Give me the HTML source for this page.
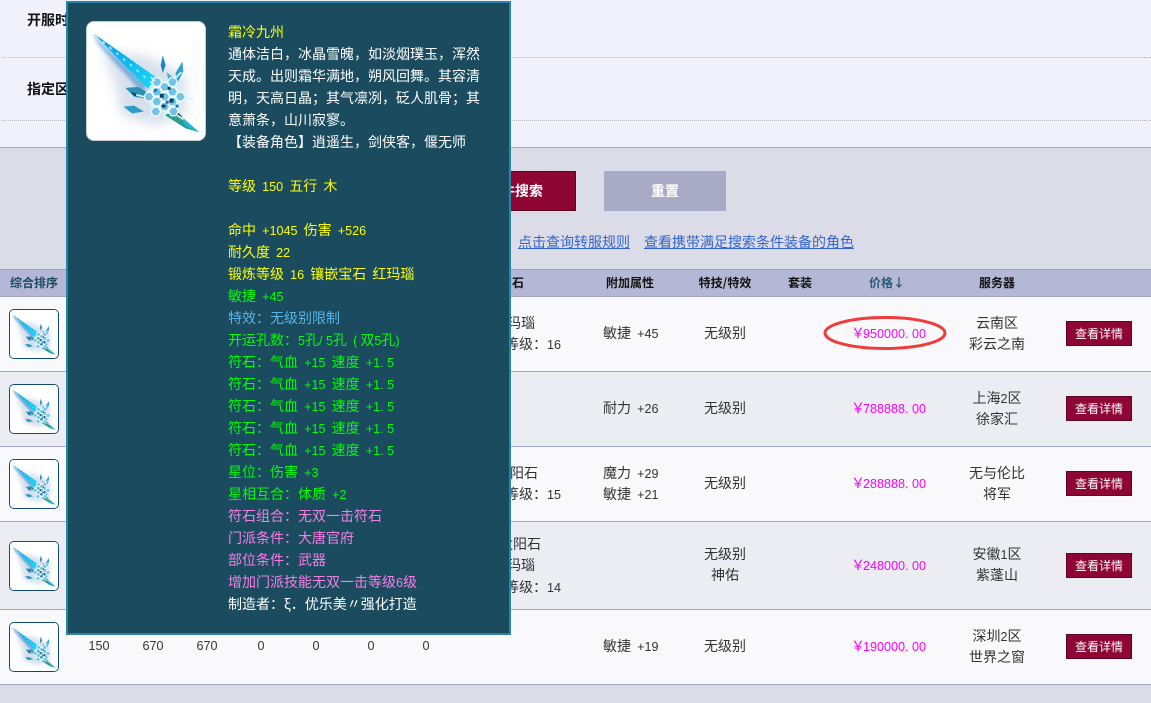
<!DOCTYPE html>
<html><head><meta charset="utf-8">
<style>
html,body{margin:0;padding:0;width:1151px;height:703px;overflow:hidden;background:#dcdce8}
body{position:relative;font:14px/22px "WenQuanYi Zen Hei","Noto Sans CJK SC",sans-serif;color:#333;word-spacing:3px}
b,i{font-style:normal}
.a{position:absolute;white-space:nowrap}
.c{position:absolute;white-space:nowrap;text-align:center;transform:translateX(-50%)}
.lh{line-height:21px}
.m{font-family:"Liberation Sans",sans-serif;font-size:12.6px;line-height:1}
.d{letter-spacing:3.5px}
.w{letter-spacing:3px}
.row{position:absolute;left:0;width:1151px;border-bottom:1px solid #a4a6c6;box-sizing:border-box}
.h{position:absolute;top:276px;font-size:12px;line-height:14px;font-weight:bold;color:#111;white-space:nowrap;transform:translateX(-50%)}
.btn{position:absolute;left:1066px;width:66px;height:25px;background:#8e0633;border:1px solid #5e0426;box-sizing:border-box;color:#fff;font-size:12px;line-height:23px;text-align:center}
.ic{position:absolute;left:9px;width:50px;height:50px;box-sizing:border-box;border:1px solid #0f4a78;border-radius:5px;background:#fff;overflow:hidden}
.ic svg{display:block;width:48px;height:48px}
.p{color:#f0f}
.p i{position:relative;left:2px}
#tip{position:absolute;left:66px;top:1px;width:445px;height:634px;box-sizing:border-box;border:2px solid #2b84a8;background:#1a4b5e;color:#fff}
#tip .t{position:absolute;left:160px;top:18px;width:262px;white-space:nowrap}
#tip .t div{height:22px;line-height:22px;overflow:visible}
.y{color:#ff0}.g{color:#0f0}.s{color:#5ab4e6}.k{color:#f67fe6}
#ti{position:absolute;left:18px;top:18px;width:120px;height:120px;box-sizing:border-box;border:1px solid #c4ccd0;border-radius:8px;background:#fff;overflow:hidden}
#ti svg{display:block;width:118px;height:118px}
</style></head><body>
<svg width="0" height="0" style="position:absolute">
<defs>
<filter id="bl" x="-40%" y="-40%" width="180%" height="180%"><feGaussianBlur stdDeviation="6"/></filter>
<filter id="bs" x="-30%" y="-30%" width="160%" height="160%"><feGaussianBlur stdDeviation="1.6"/></filter>
<filter id="bt" x="-10%" y="-10%" width="120%" height="120%"><feGaussianBlur stdDeviation=".35"/></filter>
<linearGradient id="gb" x1="0" y1="0" x2="1" y2="1"><stop offset="0" stop-color="#1a8fe0"/><stop offset=".45" stop-color="#0fb4f0"/><stop offset="1" stop-color="#18d8fa"/></linearGradient>
<g id="fl"><path d="M-2.5 -4.3H2.5L5 0L2.5 4.3H-2.5L-5 0Z" fill="#6fc2e6" stroke="#f2fdff" stroke-width="1.3"/></g>
<symbol id="sw" viewBox="0 0 120 120">
<rect width="120" height="120" fill="#fff"/>
<path d="M15 30L60 35L100 55L100 95L70 105L35 95L28 60Z" fill="#aebfd8" opacity=".5" filter="url(#bl)"/>
<path d="M5 12L60 62L58 74L12 24Z" fill="#2a7fc8" opacity=".5" filter="url(#bs)"/>
<g filter="url(#bt)">
<path d="M7 12L70 56L62 68Z" fill="url(#gb)"/>
<path d="M9 14L66 62" stroke="#8fe8ff" stroke-width="2" stroke-dasharray="3 6"/>
<path d="M74 80L114 112L100 108L72 90Z" fill="#2a9c88"/>
<path d="M96 96L114 112L100 106Z" fill="#1fb6dc"/>
<path d="M82 84L96 97" stroke="#124a42" stroke-width="2.5"/>
<path d="M77 34L80 44L77 52L75 44Z" fill="#1f86c0"/>
<path d="M97 40L98 50L92 62L90 52Z" fill="#2f9fd4"/>
<path d="M81 51L89 58L91 66L83 60Z" fill="#3eaad8"/>
<path d="M39 67L52 66L62 72L60 78L48 76Z" fill="#2a92b8"/>
<path d="M44 71L60 76L48 75Z" fill="#0a4260"/>
<path d="M37 86L48 85L58 91L46 93Z" fill="#2e9ec8"/>
<circle cx="79" cy="76" r="18" fill="#cdeff8"/>
<use href="#fl" x="79" y="76"/><use href="#fl" x="71" y="71"/><use href="#fl" x="87" y="71"/>
<use href="#fl" x="71" y="81"/><use href="#fl" x="87" y="81"/><use href="#fl" x="79" y="66"/>
<use href="#fl" x="79" y="86"/><use href="#fl" x="63" y="76"/><use href="#fl" x="95" y="76"/>
<use href="#fl" x="71" y="61"/><use href="#fl" x="87" y="61"/><use href="#fl" x="70" y="91"/><use href="#fl" x="88" y="91"/>
<g stroke="#d4f6fc" stroke-width="1.8" fill="none">
<path d="M50 74L58 76M100 76L108 79M65 56L69 60M90 57L96 51M66 95L60 102M92 95L98 99M79 91L80 104"/>
</g>
<path d="M74 73h4v4h-4zM84 78h4v4h-4zM76 84h4v3h-4zM82 66h3v3h-3z" fill="#0c3f5a"/>
<path d="M68 68h3v3h-3zM90 84h3v3h-3zM80 80h3v3h-3z" fill="#1670c0"/>
</g>
</symbol>
</defs>
</svg>

<!-- top filter area -->
<div class="a" style="left:0;top:0;width:1151px;height:147px;background:#f0f1fb;border-bottom:1px solid #a4a6c6"></div>
<div class="a" style="left:2px;top:57px;width:1149px;border-top:1px dotted #b4b6c8"></div>
<div class="a" style="left:2px;top:120px;width:1149px;border-top:1px dotted #b4b6c8"></div>
<b class="a" style="left:27px;top:9px;color:#111">开服时间</b>
<b class="a" style="left:27px;top:78px;color:#111">指定区服</b>

<!-- buttons -->
<b class="a" style="left:440px;top:171px;width:136px;height:40px;box-sizing:border-box;background:#8e0633;border:1px solid #5e0426;color:#fff;text-align:right;padding-right:32px;line-height:38px">按条件搜索</b>
<b class="a" style="left:604px;top:171px;width:122px;height:40px;background:#a9abc6;color:#fff;text-align:center;line-height:40px">重置</b>
<u class="a" style="left:518px;top:231px;color:#3366cc">点击查询转服规则</u>
<u class="a" style="left:644px;top:231px;color:#3366cc">查看携带满足搜索条件装备的角色</u>

<!-- table header -->
<div class="a" style="left:0;top:269px;width:1151px;height:28px;box-sizing:border-box;background:#b4b8d6;border-top:1px solid #a0a2c2;border-bottom:1px solid #a0a2c2"></div>
<b class="h" style="left:34px;color:#1c4a60">综合排序</b>
<b class="h" style="left:512px">宝石</b>
<b class="h" style="left:630px">附加属性</b>
<b class="h" style="left:725px;word-spacing:0">特技/特效</b>
<b class="h" style="left:800px">套装</b>
<b class="h" style="left:887px;color:#2a5a78">价格↓</b>
<b class="h" style="left:997px">服务器</b>

<!-- rows -->
<div class="row" style="top:297px;height:75px;background:#f9f9fc"></div>
<div class="row" style="top:372px;height:75px;background:#ecedf3"></div>
<div class="row" style="top:447px;height:75px;background:#f9f9fc"></div>
<div class="row" style="top:522px;height:88px;background:#ecedf3"></div>
<div class="row" style="top:610px;height:75px;background:#f9f9fc"></div>

<div class="ic" style="top:309px"><svg><use href="#sw"/></svg></div>
<div class="ic" style="top:384px"><svg><use href="#sw"/></svg></div>
<div class="ic" style="top:459px"><svg><use href="#sw"/></svg></div>
<div class="ic" style="top:541px"><svg><use href="#sw"/></svg></div>
<div class="ic" style="top:622px"><svg><use href="#sw"/></svg></div>

<!-- row 1 -->
<div class="a" style="left:493px;top:312px">红玛瑙</div>
<div class="a" style="left:505px;top:333px">等级：<span class="m">16</span></div>
<div class="a" style="left:603px;top:322px">敏捷 <span class="m">+45</span></div>
<div class="c" style="left:725px;top:322px">无级别</div>
<div class="a p" style="left:849px;top:322px"><i>￥</i><span class="m">950000<span class="d">.</span>00</span></div>
<div class="c lh" style="left:997px;top:313px">云南区<br>彩云之南</div>
<div class="btn" style="top:321px">查看详情</div>

<!-- row 2 -->
<div class="a" style="left:603px;top:397px">耐力 <span class="m">+26</span></div>
<div class="c" style="left:725px;top:397px">无级别</div>
<div class="a p" style="left:849px;top:397px"><i>￥</i><span class="m">788888<span class="d">.</span>00</span></div>
<div class="c lh" style="left:997px;top:388px">上海<span class="m">2</span>区<br>徐家汇</div>
<div class="btn" style="top:396px">查看详情</div>

<!-- row 3 -->
<div class="a" style="left:496px;top:462px">太阳石</div>
<div class="a" style="left:505px;top:483px">等级：<span class="m">15</span></div>
<div class="a lh" style="left:603px;top:463px">魔力 <span class="m">+29</span><br>敏捷 <span class="m">+21</span></div>
<div class="c" style="left:725px;top:472px">无级别</div>
<div class="a p" style="left:849px;top:472px"><i>￥</i><span class="m">288888<span class="d">.</span>00</span></div>
<div class="c lh" style="left:997px;top:463px">无与伦比<br>将军</div>
<div class="btn" style="top:471px">查看详情</div>

<!-- row 4 -->
<div class="a" style="left:499px;top:533px">太阳石</div>
<div class="a" style="left:493px;top:554px">红玛瑙</div>
<div class="a" style="left:505px;top:576px">等级：<span class="m">14</span></div>
<div class="c lh" style="left:725px;top:544px">无级别<br>神佑</div>
<div class="a p" style="left:849px;top:554px"><i>￥</i><span class="m">248000<span class="d">.</span>00</span></div>
<div class="c lh" style="left:997px;top:544px">安徽<span class="m">1</span>区<br>紫蓬山</div>
<div class="btn" style="top:553px">查看详情</div>

<!-- row 5 -->
<div class="c m" style="left:99px;top:640px">150</div>
<div class="c m" style="left:153px;top:640px">670</div>
<div class="c m" style="left:207px;top:640px">670</div>
<div class="c m" style="left:261px;top:640px">0</div>
<div class="c m" style="left:316px;top:640px">0</div>
<div class="c m" style="left:371px;top:640px">0</div>
<div class="c m" style="left:426px;top:640px">0</div>
<div class="a" style="left:603px;top:635px">敏捷 <span class="m">+19</span></div>
<div class="c" style="left:725px;top:635px">无级别</div>
<div class="a p" style="left:849px;top:635px"><i>￥</i><span class="m">190000<span class="d">.</span>00</span></div>
<div class="c lh" style="left:997px;top:626px">深圳<span class="m">2</span>区<br>世界之窗</div>
<div class="btn" style="top:634px">查看详情</div>

<!-- red ellipse -->
<svg class="a" style="left:820px;top:312px" width="132" height="42"><ellipse cx="65" cy="21" rx="60" ry="15.5" fill="none" stroke="#f23c3c" stroke-width="3"/></svg>

<!-- tooltip -->
<div id="tip">
<div id="ti"><svg><use href="#sw"/></svg></div>
<div class="t">
<div class="y">霜冷九州</div>
<div>通体洁白，冰晶雪魄，如淡烟璞玉，浑然</div>
<div>天成。出则霜华满地，朔风回舞。其容清</div>
<div>明，天高日晶；其气凛冽，砭人肌骨；其</div>
<div>意萧条，山川寂寥。</div>
<div>【装备角色】逍遥生，剑侠客，偃无师</div>
<div>&nbsp;</div>
<div class="y">等级 <span class="m">150</span> 五行 木</div>
<div>&nbsp;</div>
<div class="y">命中 <span class="m">+1045</span> 伤害 <span class="m">+526</span></div>
<div class="y">耐久度 <span class="m">22</span></div>
<div class="y">锻炼等级 <span class="m">16</span> 镶嵌宝石 红玛瑙</div>
<div class="g">敏捷 <span class="m">+45</span></div>
<div class="s">特效：无级别限制</div>
<div class="g">开运孔数：<span class="m">5</span>孔<span class="m"><span class="d">/</span>5</span>孔 <span class="m"><span class="w">(</span></span>双<span class="m">5</span>孔<span class="m">)</span></div>
<div class="g">符石：气血 <span class="m">+15</span> 速度 <span class="m">+1<span class="d">.</span>5</span></div>
<div class="g">符石：气血 <span class="m">+15</span> 速度 <span class="m">+1<span class="d">.</span>5</span></div>
<div class="g">符石：气血 <span class="m">+15</span> 速度 <span class="m">+1<span class="d">.</span>5</span></div>
<div class="g">符石：气血 <span class="m">+15</span> 速度 <span class="m">+1<span class="d">.</span>5</span></div>
<div class="g">符石：气血 <span class="m">+15</span> 速度 <span class="m">+1<span class="d">.</span>5</span></div>
<div class="g">星位：伤害 <span class="m">+3</span></div>
<div class="g">星相互合：体质 <span class="m">+2</span></div>
<div class="k">符石组合：无双一击符石</div>
<div class="k">门派条件：大唐官府</div>
<div class="k">部位条件：武器</div>
<div class="k">增加门派技能无双一击等级<span class="m">6</span>级</div>
<div>制造者：ξ．优乐美〃强化打造</div>
</div>
</div>
</body></html>
